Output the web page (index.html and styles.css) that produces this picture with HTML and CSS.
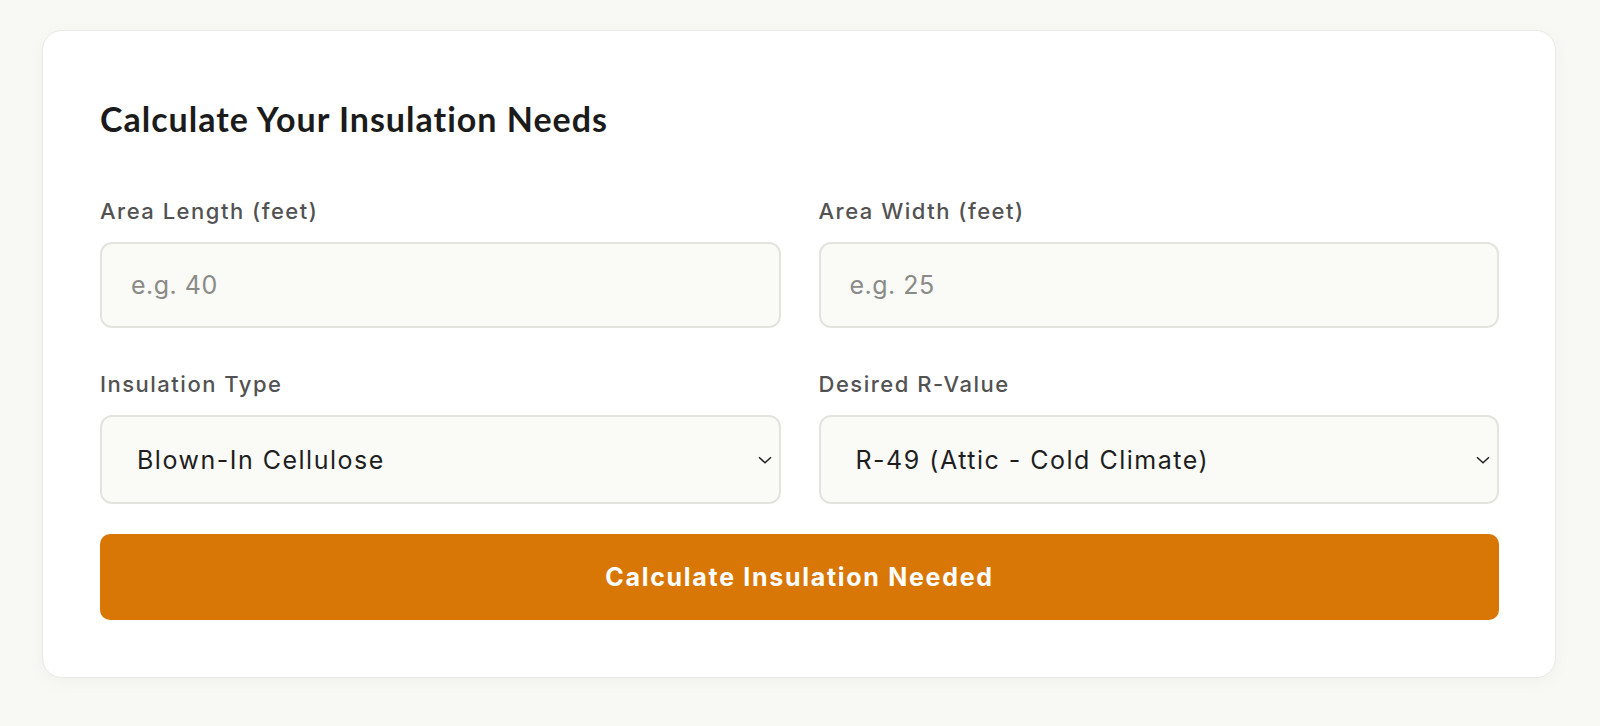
FILE: index.html
```html
<!DOCTYPE html>
<html lang="en">
<head>
<meta charset="utf-8">
<title>Insulation Calculator</title>
<link rel="stylesheet" href="styles.css">
</head>
<body>
<div class="page">
  <section class="card">
    <h2 class="title">Calculate Your Insulation Needs</h2>
    <div class="grid">
      <div class="field">
        <label class="label" for="len">Area Length (feet)</label>
        <input class="input" id="len" type="text" placeholder="e.g. 40">
      </div>
      <div class="field">
        <label class="label" for="wid">Area Width (feet)</label>
        <input class="input" id="wid" type="text" placeholder="e.g. 25">
      </div>
      <div class="field">
        <label class="label" for="type">Insulation Type</label>
        <div class="select-wrap">
          <select class="select" id="type">
            <option>Blown-In Cellulose</option>
          </select>
          <svg class="chev" viewBox="0 0 14 8" width="14" height="8"><path d="M1 1.2 L7 6.8 L13 1.2" fill="none" stroke="#222" stroke-width="1.5"/></svg>
        </div>
      </div>
      <div class="field">
        <label class="label" for="rv">Desired R-Value</label>
        <div class="select-wrap">
          <select class="select" id="rv">
            <option>R-49 (Attic - Cold Climate)</option>
          </select>
          <svg class="chev" viewBox="0 0 14 8" width="14" height="8"><path d="M1 1.2 L7 6.8 L13 1.2" fill="none" stroke="#222" stroke-width="1.5"/></svg>
        </div>
      </div>
    </div>
    <button class="btn" type="button">Calculate Insulation Needed</button>
  </section>
</div>
</body>
</html>
```

FILE: styles.css
```css
* { box-sizing: border-box; }
html, body { margin: 0; padding: 0; }
body {
  background: #f8f8f5;
  font-family: "Inter", "DejaVu Sans", sans-serif;
  height: 726px;
  overflow: hidden;
}
.page {
  padding: 30px 44px 0 42px;
}
.card {
  background: #ffffff;
  border: 1px solid #e9e9e5;
  border-radius: 20px;
  box-shadow: 0 4px 18px rgba(0, 0, 0, 0.035);
  padding: 68px 56px 57px 57px;
}
.title {
  margin: 0 0 57px 0;
  font-family: "Lato", "Liberation Sans", sans-serif;
  font-weight: 700;
  font-size: 34px;
  line-height: 40px;
  color: #1b1b1b;
  letter-spacing: 1px;
}
.grid {
  display: grid;
  grid-template-columns: 1fr 1fr;
  column-gap: 38px;
  row-gap: 41px;
}
.field {
  display: flex;
  flex-direction: column;
}
.label {
  font-size: 22px;
  font-weight: 500;
  line-height: 30px;
  color: #525252;
  letter-spacing: 1.5px;
  margin-bottom: 16px;
}
.input {
  height: 86px;
  border: 2px solid #e4e4df;
  border-radius: 12px;
  background: #fafaf7;
  padding: 0 29px;
  font-family: "Inter", "DejaVu Sans", sans-serif;
  font-size: 25px;
  letter-spacing: 0.5px;
  color: #222;
  outline: none;
}
.input::placeholder {
  color: #8a8a87;
}
.select-wrap {
  position: relative;
}
.select {
  width: 100%;
  height: 89px;
  border: 2px solid #e4e4df;
  border-radius: 12px;
  background: #fafaf7;
  padding: 0 60px 0 35px;
  font-family: "Inter", "DejaVu Sans", sans-serif;
  font-size: 25px;
  letter-spacing: 1.5px;
  color: #1e1e1e;
  appearance: none;
  -webkit-appearance: none;
  outline: none;
}
.chev {
  position: absolute;
  right: 9px;
  top: 41px;
  pointer-events: none;
}
.btn {
  display: block;
  width: 100%;
  margin-top: 30px;
  height: 86px;
  border: none;
  border-radius: 10px;
  background: #d97706;
  color: #ffffff;
  font-family: "Inter", "DejaVu Sans", sans-serif;
  font-weight: 700;
  font-size: 25px;
  letter-spacing: 1.7px;
  cursor: pointer;
}
```
